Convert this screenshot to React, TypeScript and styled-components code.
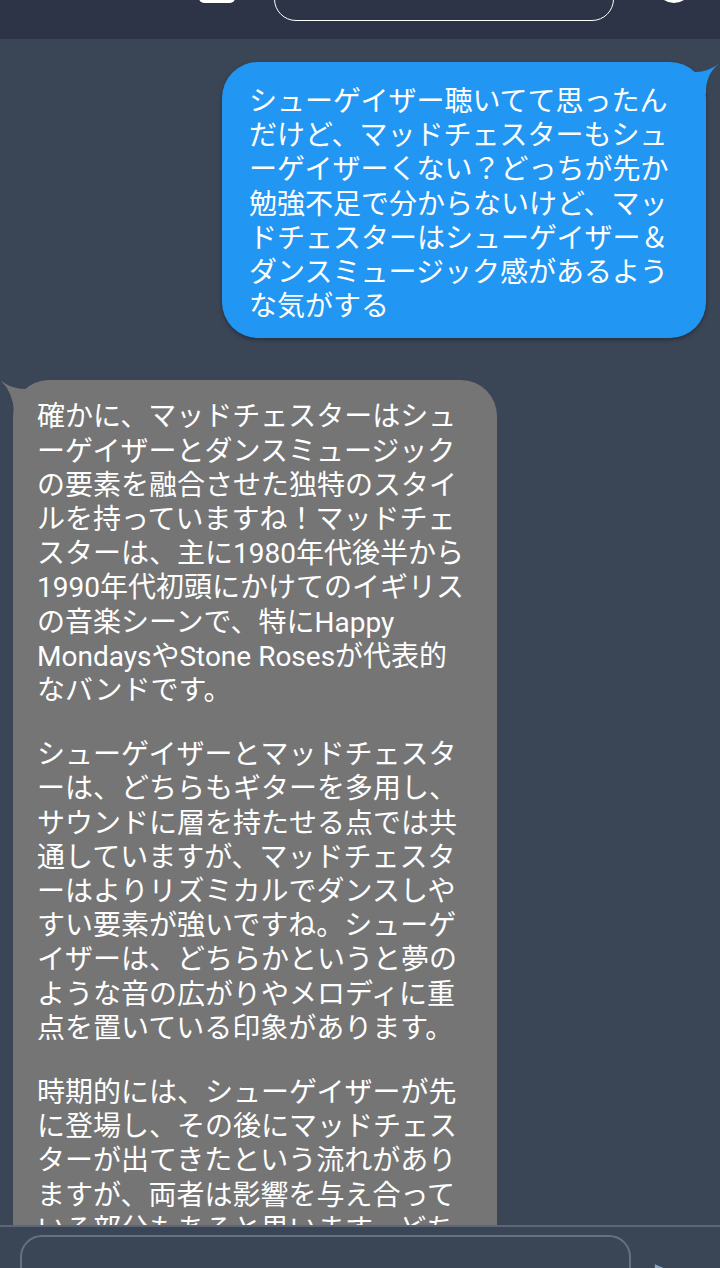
import React from "react";
import styled, { createGlobalStyle } from "styled-components";

const GlobalStyle = createGlobalStyle`
  html, body {
    margin: 0;
    padding: 0;
    background: #3a4556;
    overflow: hidden;
  }
  * { box-sizing: border-box; }
`;

const Screen = styled.div`
  height: 100vh;
  display: flex;
  flex-direction: column;
  overflow: hidden;
  background: #3a4556;
  font-family: Roboto, "Noto Sans CJK JP", sans-serif;
`;

const Header = styled.header`
  height: 39px;
  flex-shrink: 0;
  background: #2e3447;
  display: flex;
  align-items: flex-end;
  padding-left: 199px;
  overflow: hidden;
`;

const HeaderIcon = styled.div`
  width: 36px;
  height: 40px;
  flex-shrink: 0;
  background: #ffffff;
  border-radius: 5px;
  margin-bottom: 36px;
`;

const SearchBox = styled.div`
  width: 340px;
  height: 60px;
  flex-shrink: 0;
  margin-left: 39px;
  margin-bottom: 18px;
  border: 1.5px solid #ffffff;
  border-radius: 22px;
`;

const Avatar = styled.div`
  width: 36px;
  height: 36px;
  flex-shrink: 0;
  margin-left: 42px;
  margin-bottom: 36px;
  border: 3px solid #ffffff;
  border-radius: 50%;
`;

const Messages = styled.main`
  flex: 1;
  overflow: hidden;
  display: flex;
  flex-direction: column;
  gap: 42px;
  padding: 23px 14px 0 13px;
`;

const Bubble = styled.div<{ $mine?: boolean }>`
  position: relative;
  flex-shrink: 0;
  width: 484px;
  align-self: ${(p) => (p.$mine ? "flex-end" : "flex-start")};
  background: ${(p) => (p.$mine ? "#2196f3" : "#757575")};
  color: #ffffff;
  border-radius: 36px;
  padding: ${(p) => (p.$mine ? "23px 20px 14px 27px" : "20px 20px 18px 24px")};
  box-shadow: ${(p) => (p.$mine ? "0 2px 4px rgba(0, 0, 0, 0.3)" : "none")};
  display: flex;
  flex-direction: column;
  gap: 30px;
`;

const Paragraph = styled.p`
  margin: 0;
  font-size: 28px;
  line-height: 34.2px;
  white-space: pre;
  position: relative;
`;

const Tail = styled.svg<{ $mine?: boolean }>`
  position: absolute;
  top: -2px;
  width: 50px;
  height: 34px;
  ${(p) => (p.$mine ? "right: -14px;" : "left: -13px;")}
`;

const Footer = styled.footer`
  height: 43px;
  flex-shrink: 0;
  border-top: 2px solid #5c6678;
  background: #3a4556;
  display: flex;
  align-items: flex-start;
  padding: 8px 0 0 20px;
  gap: 21px;
  overflow: hidden;
`;

const InputBox = styled.div`
  width: 611px;
  height: 60px;
  flex-shrink: 0;
  border: 2px solid #657084;
  border-radius: 22px;
`;

const SendButton = styled.svg`
  width: 34px;
  height: 34px;
  flex-shrink: 0;
  margin-top: 25px;
`;

const userParagraphs = [
  [
    "シューゲイザー聴いてて思ったん",
    "だけど、マッドチェスターもシュ",
    "ーゲイザーくない？どっちが先か",
    "勉強不足で分からないけど、マッ",
    "ドチェスターはシューゲイザー＆",
    "ダンスミュージック感があるよう",
    "な気がする",
  ],
];

const replyParagraphs = [
  [
    "確かに、マッドチェスターはシュ",
    "ーゲイザーとダンスミュージック",
    "の要素を融合させた独特のスタイ",
    "ルを持っていますね！マッドチェ",
    "スターは、主に1980年代後半から",
    "1990年代初頭にかけてのイギリス",
    "の音楽シーンで、特にHappy",
    "MondaysやStone Rosesが代表的",
    "なバンドです。",
  ],
  [
    "シューゲイザーとマッドチェスタ",
    "ーは、どちらもギターを多用し、",
    "サウンドに層を持たせる点では共",
    "通していますが、マッドチェスタ",
    "ーはよりリズミカルでダンスしや",
    "すい要素が強いですね。シューゲ",
    "イザーは、どちらかというと夢の",
    "ような音の広がりやメロディに重",
    "点を置いている印象があります。",
  ],
  [
    "時期的には、シューゲイザーが先",
    "に登場し、その後にマッドチェス",
    "ターが出てきたという流れがあり",
    "ますが、両者は影響を与え合って",
    "いる部分もあると思います。どち",
    "らも独自の魅力があるので、ぜひ",
    "聴き比べてみてください！",
  ],
];

export default function App() {
  return (
    <>
      <GlobalStyle />
      <Screen>
        <Header>
          <HeaderIcon />
          <SearchBox />
          <Avatar />
        </Header>
        <Messages>
          <Bubble $mine>
            <Tail $mine viewBox="0 0 50 34">
              <path d="M10 8 Q30 18 50 3 Q35 14 36 34 L10 34 Z" fill="#2196f3" />
            </Tail>
            {userParagraphs.map((lines, i) => (
              <Paragraph key={i}>{lines.join("\n")}</Paragraph>
            ))}
          </Bubble>
          <Bubble>
            <Tail viewBox="0 0 50 34">
              <path d="M40 8 Q20 16 1 3 Q13 14 14 34 L40 34 Z" fill="#757575" />
            </Tail>
            {replyParagraphs.map((lines, i) => (
              <Paragraph key={i}>{lines.join("\n")}</Paragraph>
            ))}
          </Bubble>
        </Messages>
        <Footer>
          <InputBox />
          <SendButton viewBox="0 0 24 24">
            <path d="M2.01 21L23 12 2.01 3 2 10l15 2-15 2z" fill="#8ea2ba" />
          </SendButton>
        </Footer>
      </Screen>
    </>
  );
}
